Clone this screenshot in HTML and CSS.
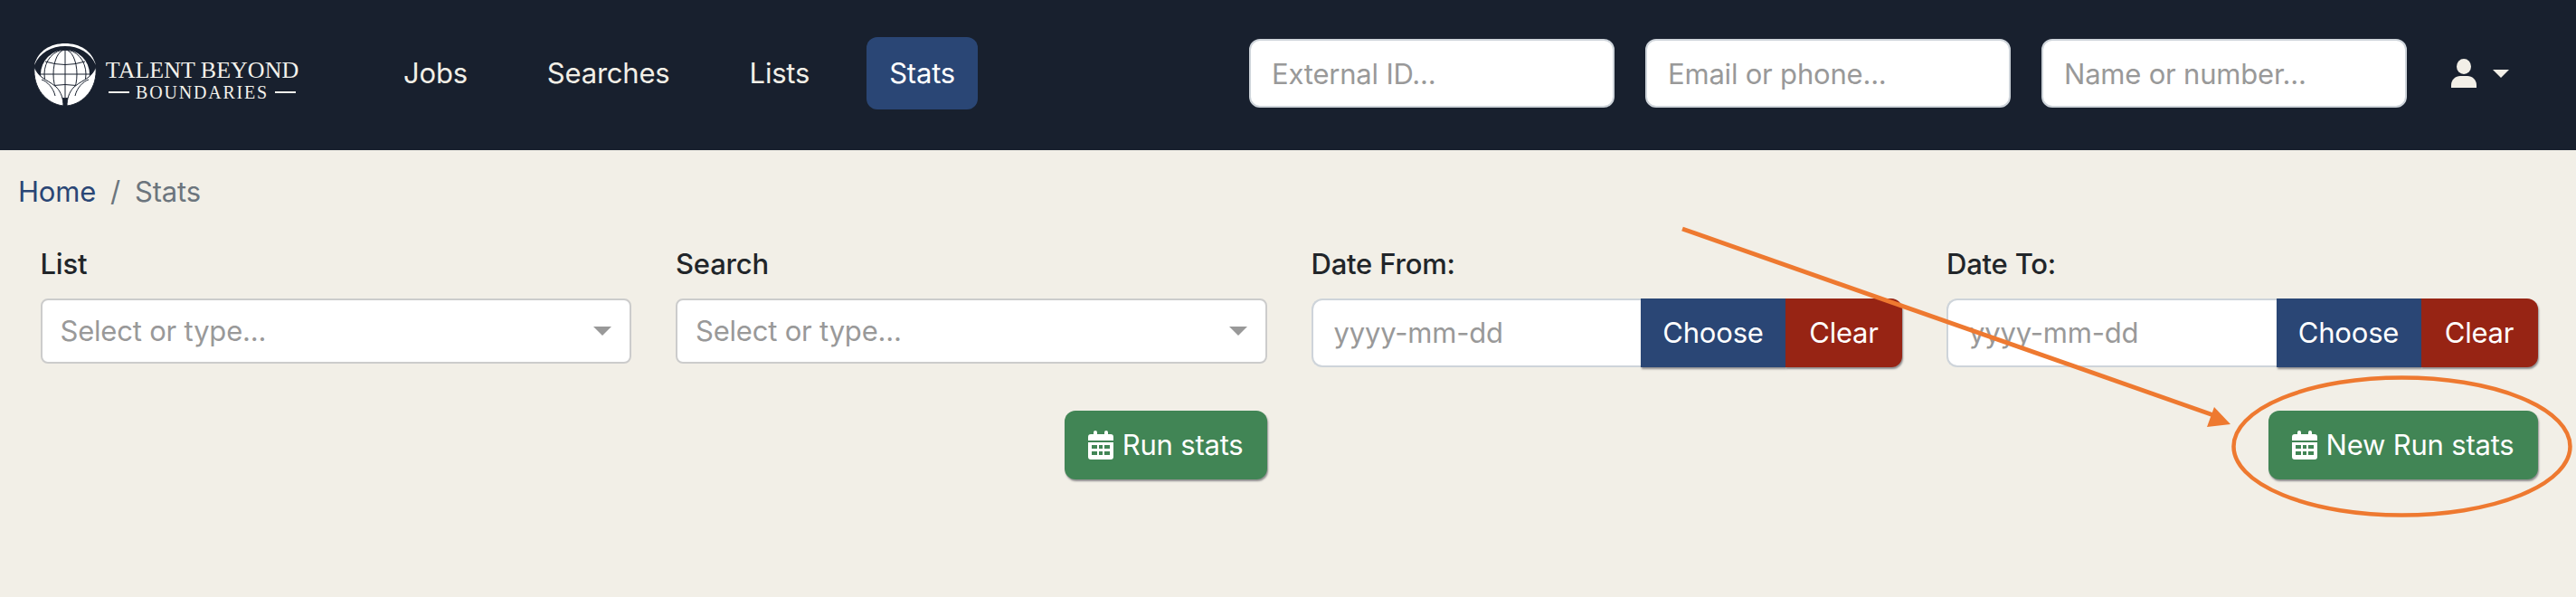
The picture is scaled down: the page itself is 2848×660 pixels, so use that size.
FILE: index.html
```html
<!DOCTYPE html>
<html lang="en">
<head>
  <meta charset="UTF-8" />
  <title>Stats</title>
  <link rel="stylesheet" href="styles.css">
</head>
<body>
  <header class="topbar">
    <a class="brand" href="#">
      <svg class="brand-mark" viewBox="0 0 70 70" width="70" height="70">
        <path class="mark-white" d="M1,25 C5,9 19,1 35,1 C51,1 65,9 69,25 C63,11 50,4 35,4 C20,4 7,11 1,25Z"/>
        <circle class="mark-white" cx="35" cy="35" r="27"/>
        <g class="mark-grid">
          <ellipse cx="35" cy="35" rx="13" ry="27"/>
          <ellipse cx="35" cy="35" rx="23" ry="27"/>
          <path d="M35,8 V62 M8,35 H62 M13,21 Q35,28 57,21 M13,50 Q35,43 57,50"/>
        </g>
        <path class="mark-white mark-hand" d="M1,27 C-1,50 14,68 33,70 C33,63 31,55 25,49 C19,44 14,42 10,39 C6,36 3,32 1,27Z"/>
        <path class="mark-white mark-hand" d="M69,27 C71,50 56,68 37,70 C37,63 39,55 45,49 C51,44 56,42 60,39 C64,36 67,32 69,27Z"/>
        <path class="mark-grid" d="M9,41 C15,43 22,50 24,59 M61,41 C55,43 48,50 46,59"/>
      </svg>
      <span class="brand-name">
        <span class="brand-top">TALENT BEYOND</span>
        <span class="brand-bottom">BOUNDARIES</span>
      </span>
    </a>
    <nav class="main-nav">
      <a href="#">Jobs</a>
      <a href="#">Searches</a>
      <a href="#">Lists</a>
      <a class="active" href="#">Stats</a>
    </nav>
    <div class="quick-search">
      <input type="text" placeholder="External ID...">
      <input type="text" placeholder="Email or phone...">
      <input type="text" placeholder="Name or number...">
    </div>
    <div class="user-menu">
      <svg viewBox="0 0 28 32" width="28" height="32">
        <ellipse cx="14" cy="8.5" rx="8" ry="8.5"/>
        <path d="M0,32 V29 C0,23 5,19 10,19 H18 C23,19 28,23 28,29 V32Z"/>
      </svg>
      <span class="caret"></span>
    </div>
  </header>

  <ol class="breadcrumb">
    <li><a href="#">Home</a></li>
    <li class="sep">/</li>
    <li class="current">Stats</li>
  </ol>

  <main class="stats-form">
    <div class="field">
      <label>List</label>
      <div class="select-box">
        <span>Select or type...</span>
        <span class="select-arrow"></span>
      </div>
    </div>
    <div class="field">
      <label>Search</label>
      <div class="select-box">
        <span>Select or type...</span>
        <span class="select-arrow"></span>
      </div>
    </div>
    <div class="field">
      <label>Date From:</label>
      <div class="date-group">
        <input type="text" placeholder="yyyy-mm-dd">
        <button class="btn-choose">Choose</button>
        <button class="btn-clear">Clear</button>
      </div>
    </div>
    <div class="field">
      <label>Date To:</label>
      <div class="date-group">
        <input type="text" placeholder="yyyy-mm-dd">
        <button class="btn-choose">Choose</button>
        <button class="btn-clear">Clear</button>
      </div>
    </div>

    <button class="btn-run run-old">
      <svg viewBox="0 0 28 32" width="28" height="32"><path fill-rule="evenodd" d="M6,2 a2,2 0 0 1 4,0 V4 H18 V2 a2,2 0 0 1 4,0 V4 H25 a3,3 0 0 1 3,3 V11 H0 V7 a3,3 0 0 1 3,-3 H6Z M0,13 H28 V29 a3,3 0 0 1 -3,3 H3 a3,3 0 0 1 -3,-3Z M4,16 V20 H10 V16Z M12,16 V20 H16 V16Z M18,16 V20 H24 V16Z M4,23 V27 H10 V23Z M12,23 V27 H16 V23Z M18,23 V27 H24 V23Z"/></svg>
      Run stats
    </button>
    <button class="btn-run run-new">
      <svg viewBox="0 0 28 32" width="28" height="32"><path fill-rule="evenodd" d="M6,2 a2,2 0 0 1 4,0 V4 H18 V2 a2,2 0 0 1 4,0 V4 H25 a3,3 0 0 1 3,3 V11 H0 V7 a3,3 0 0 1 3,-3 H6Z M0,13 H28 V29 a3,3 0 0 1 -3,3 H3 a3,3 0 0 1 -3,-3Z M4,16 V20 H10 V16Z M12,16 V20 H16 V16Z M18,16 V20 H24 V16Z M4,23 V27 H10 V23Z M12,23 V27 H16 V23Z M18,23 V27 H24 V23Z"/></svg>
      New Run stats
    </button>
  </main>

  <!-- annotation drawn on top of the screenshot -->
  <svg class="annotation" viewBox="0 0 2848 660" width="2848" height="660">
    <path class="note-line" d="M1860,253 L2450,460"/>
    <polygon class="note-head" points="2466,469 2448,450 2440,472"/>
    <ellipse class="note-ring" cx="2655.5" cy="493.5" rx="186" ry="76"/>
  </svg>
</body>
</html>
```

FILE: styles.css
```css
* {
  box-sizing: border-box;
}

body {
  font-family: Inter, "Noto Sans", sans-serif;
  font-size: 31px;
  letter-spacing: -0.2px;
  line-height: 1.5;
  color: #212529;
  background-color: #f2efe7;
  margin: 0;
  height: 660px;
  overflow: hidden;
  position: relative;
}

a {
  text-decoration: none;
  color: inherit;
}

input::placeholder {
  color: #999;
  opacity: 1;
}

/* top bar */
.topbar {
  display: flex;
  align-items: center;
  height: 166px;
  background-color: #18202e;
  padding: 0 74px 4px 37px;
}

.brand {
  display: flex;
  align-items: center;
  gap: 10px;
  width: 384px;
  color: #f4f2ec;
}

.brand-mark {
  flex: none;
  overflow: visible;
  margin-top: 2px;
}

.mark-white {
  fill: #fff;
}

.mark-hand {
  stroke: #18202e;
  stroke-width: 1;
}

.mark-grid {
  fill: none;
  stroke: #18202e;
  stroke-width: 1;
}

.brand-name {
  display: flex;
  flex-direction: column;
  align-items: center;
  font-family: "Liberation Serif", serif;
  letter-spacing: 0;
  width: 213px;
  padding-top: 17px;
}

.brand-top {
  font-size: 26px;
  line-height: 25px;
  white-space: nowrap;
}

.brand-bottom {
  display: flex;
  align-items: center;
  justify-content: center;
  gap: 7px;
  width: 207px;
  font-size: 20px;
  line-height: 24px;
  letter-spacing: 1.8px;
}

.brand-bottom::before,
.brand-bottom::after {
  content: "";
  flex: 1;
  height: 2px;
  background-color: #f4f2ec;
}

.main-nav {
  display: flex;
  gap: 38px;
}

.main-nav a {
  display: block;
  padding: 18px 25px;
  border-radius: 12px;
  color: #f2efe7;
  line-height: 44px;
}

.main-nav a.active {
  background-color: #2a4675;
  color: #fff;
}

.quick-search {
  display: flex;
  gap: 34px;
  margin-left: auto;
}

.quick-search input {
  width: 404px;
  height: 76px;
  padding: 0 23px;
  border: 2px solid #ced4da;
  border-radius: 12px;
  font: inherit;
  letter-spacing: inherit;
  background-color: #fff;
}

.user-menu {
  display: flex;
  align-items: center;
  gap: 18px;
  margin-left: 49px;
  fill: #f2efe7;
}

.caret {
  border-top: 9px solid #f2efe7;
  border-left: 9px solid transparent;
  border-right: 9px solid transparent;
}

/* breadcrumb */
.breadcrumb {
  display: flex;
  gap: 16px;
  list-style: none;
  margin: 0;
  padding: 23px 0 0 20px;
  line-height: 45px;
}

.breadcrumb a {
  color: #2a4675;
}

.breadcrumb .sep,
.breadcrumb .current {
  color: #6c757d;
}

/* form */
.stats-form {
  display: grid;
  grid-template-columns: repeat(4, 653.5px);
  column-gap: 49px;
  row-gap: 48px;
  padding: 35px 0 0 44.5px;
}

.field label {
  display: block;
  font-weight: 500;
  line-height: 45px;
  margin-bottom: 16px;
}

.select-box {
  display: flex;
  align-items: center;
  justify-content: space-between;
  height: 72px;
  padding: 0 20px;
  border: 2px solid #ccc;
  border-radius: 8px;
  background-color: #fff;
  color: #999;
}

.select-arrow {
  border-top: 10px solid #999;
  border-left: 10px solid transparent;
  border-right: 10px solid transparent;
}

.date-group {
  display: flex;
  height: 76px;
}

.date-group input {
  flex: 1;
  min-width: 0;
  padding: 0 23px;
  border: 2px solid #ced4da;
  border-right: none;
  border-radius: 12px 0 0 12px;
  font: inherit;
  letter-spacing: inherit;
  background-color: #fff;
}

.date-group button,
.btn-run {
  border: none;
  font: inherit;
  letter-spacing: inherit;
  color: #fff;
  cursor: pointer;
  box-shadow: 1px 2px 2px rgba(60, 60, 70, 0.55);
}

.btn-choose {
  width: 160px;
  padding: 0;
  background-color: #2a4675;
}

.btn-clear {
  width: 129px;
  padding: 0;
  background-color: #972414;
  border-radius: 0 12px 12px 0;
}

.btn-run {
  display: flex;
  align-items: center;
  justify-content: center;
  gap: 10px;
  height: 76px;
  padding: 0 26px;
  border-radius: 12px;
  background-color: #418555;
  justify-self: end;
  fill: #fff;
}

.run-old {
  grid-column: 2;
}

.run-new {
  grid-column: 4;
}

/* annotation */
.annotation {
  position: absolute;
  top: 0;
  left: 0;
  pointer-events: none;
}

.note-line {
  stroke: #ee7930;
  stroke-width: 5;
  fill: none;
}

.note-head {
  fill: #ee7930;
}

.note-ring {
  stroke: #ee7930;
  stroke-width: 4.5;
  fill: none;
}
```
